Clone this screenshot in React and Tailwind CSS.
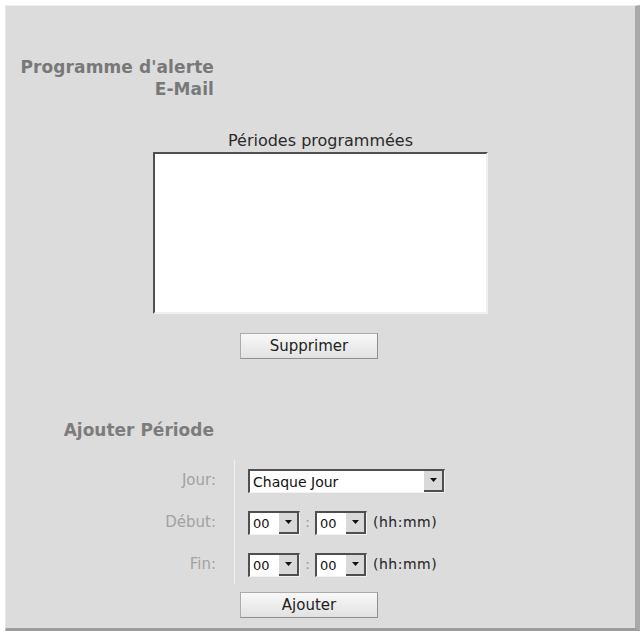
import React from 'react';

const font = { fontFamily: '"DejaVu Sans", "Liberation Sans", sans-serif' };

// Windows-classic style dropdown: sunken field + raised arrow box
function FakeSelect({ value, width, textSize }) {
    return (
        <div
            className={`flex h-[24px] bg-white border-t-2 border-l-2 border-t-[#4f4f4f] border-l-[#4f4f4f] border-r border-b border-r-[#f2f2f2] border-b-[#f2f2f2] ${width}`}
        >
            <span className={`flex-1 pl-[3px] leading-[22px] text-[#111] ${textSize}`}>{value}</span>
            <span className="w-[20px] flex items-center justify-center bg-[#d9d9d9] border-r-2 border-b-2 border-[#4f4f4f]">
                <svg width="7" height="4" viewBox="0 0 7 4">
                    <path d="M0 0h7L3.5 4z" fill="#111" />
                </svg>
            </span>
        </div>
    );
}

function TimeInput() {
    return (
        <div className="flex items-center h-[25px]">
            <FakeSelect value="00" width="w-[52px]" textSize="text-[13px]" />
            <span className="w-[15px] text-center text-[14px] text-[#9a9a9a]">:</span>
            <FakeSelect value="00" width="w-[52px]" textSize="text-[13px]" />
            <span className="ml-[6px] text-[14px] tracking-[0.5px] text-[#222]">(hh:mm)</span>
        </div>
    );
}

function GreyButton({ children }) {
    return (
        <button className="w-[138px] h-[26px] bg-gradient-to-b from-[#f8f8f8] to-[#e2e2e2] border border-[#acacac] border-b-[#8f8f8f] border-r-[#8f8f8f] text-[15px] text-[#222]">
            {children}
        </button>
    );
}

export default function App() {
    return (
        <div className="w-[640px] h-[631px] bg-white pt-[5px] pl-[5px] flex" style={font}>
            <div className="flex-1 flex flex-col bg-[#dcdcdc] border-t border-l border-t-[#efefef] border-l-[#e6e6e6] border-r-[5px] border-r-[#a9a9a9] border-b-[3px] border-b-[#9c9c9c]">
                {/* title */}
                <div className="w-[208px] pt-[50px] text-right text-[17px] leading-[22px] font-bold tracking-[0.1px] text-[#787878]">
                    Programme d'alerte
                    <br />
                    E-Mail
                </div>

                {/* scheduled periods */}
                <div className="flex flex-col items-center mt-[31px]">
                    <div className="text-[16px] leading-[20px] text-[#2a2a2a]">Périodes programmées</div>
                    <div className="w-[335px] h-[162px] mt-[1px] bg-white border-2 border-t-[#505050] border-l-[#505050] border-r-[#f0f0f0] border-b-[#f0f0f0]" />
                </div>
                <div className="ml-[234px] mt-[19px]">
                    <GreyButton>Supprimer</GreyButton>
                </div>

                {/* add period */}
                <div className="w-[208px] mt-[60px] text-right text-[17px] leading-[22px] font-bold text-[#7c7c7c]">
                    Ajouter Période
                </div>
                <div className="flex mt-[19px]">
                    <div className="w-[228px] pt-[8px] pr-[18px] flex flex-col items-end gap-[17px] text-[15px] text-[#a2a2a2]">
                        <div className="h-[25px] leading-[25px]">Jour:</div>
                        <div className="h-[25px] leading-[25px]">Début:</div>
                        <div className="h-[25px] leading-[25px]">Fin:</div>
                    </div>
                    <div className="border-l border-[#f2f2f2] pl-[13px] pt-[8px] pb-[7px] flex flex-col gap-[17px]">
                        <div className="h-[25px] flex items-center">
                            <FakeSelect value="Chaque Jour" width="w-[197px]" textSize="text-[14px]" />
                        </div>
                        <TimeInput />
                        <TimeInput />
                    </div>
                </div>
                <div className="ml-[234px] mt-[8px]">
                    <GreyButton>Ajouter</GreyButton>
                </div>
            </div>
        </div>
    );
}
